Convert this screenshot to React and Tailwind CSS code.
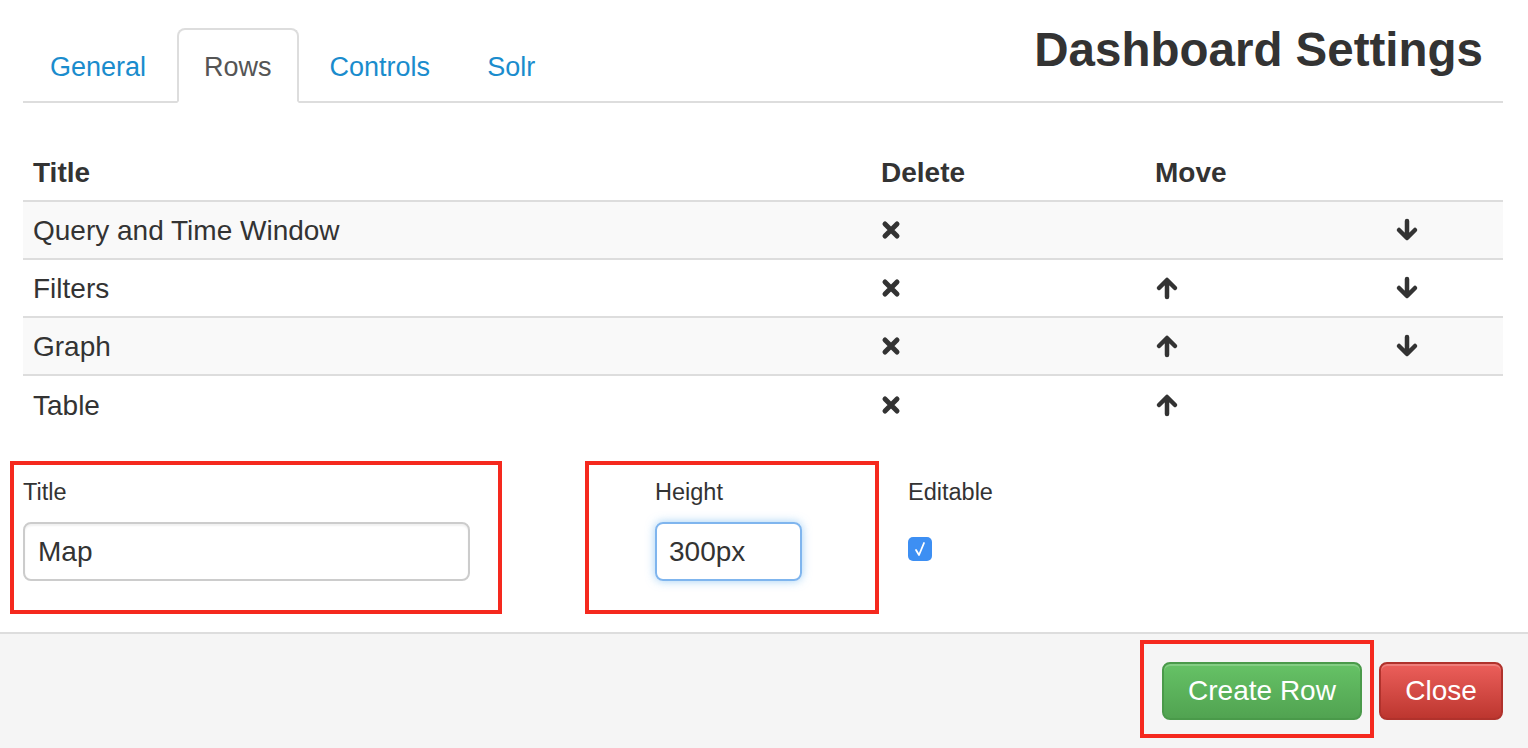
import React from "react";

const rows = [
  { title: "Query and Time Window", up: false, down: true },
  { title: "Filters", up: true, down: true },
  { title: "Graph", up: true, down: true },
  { title: "Table", up: true, down: false },
];

// icono de borrar (x gruesa)
const RemoveIcon = () => (
  <svg width="20" height="20" viewBox="0 0 20 20">
    <path d="M4 4 L16 16 M16 4 L4 16" stroke="#333" strokeWidth="5" strokeLinecap="round" />
  </svg>
);

const ArrowUp = () => (
  <svg width="24" height="24" viewBox="0 0 24 24">
    <path d="M12 21 V5 M4 12 L12 4 L20 12" stroke="#333" strokeWidth="4.5" strokeLinecap="round" strokeLinejoin="round" fill="none" />
  </svg>
);

const ArrowDown = () => (
  <svg width="24" height="24" viewBox="0 0 24 24">
    <path d="M12 3 V19 M4 12 L12 20 L20 12" stroke="#333" strokeWidth="4.5" strokeLinecap="round" strokeLinejoin="round" fill="none" />
  </svg>
);

const App = () => {
  const tabs = ["General", "Rows", "Controls", "Solr"];

  return (
    <div
      className="relative w-[1528px] h-[748px] overflow-hidden bg-white text-[#333] flex flex-col"
      style={{ fontFamily: '"Liberation Sans", Arial, sans-serif' }}
    >
      <div className="pl-[23px] pr-[25px]">
        {/* Pestañas y título */}
        <div className="flex items-end justify-between border-b-2 border-[#ddd] h-[103px]">
          <div className="flex items-end gap-[5px] pl-[1px]">
            {tabs.map((t) =>
              t === "Rows" ? (
                <div
                  key={t}
                  className="mb-[-2px] px-[25px] h-[75px] flex items-center pt-[3px] border-2 border-[#ddd] border-b-white rounded-t-[8px] bg-white text-[27px] text-[#555]"
                >
                  {t}
                </div>
              ) : (
                <div key={t} className="mb-[-2px] px-[26px] h-[75px] flex items-center pt-[3px] text-[27px] text-[#1a8ccd]">
                  {t}
                </div>
              )
            )}
          </div>
          <h1 className="self-start mt-[22px] mr-[20px] text-[47.5px] leading-[56px] font-bold text-[#333]">
            Dashboard Settings
          </h1>
        </div>

        {/* Tabla de filas */}
        <div className="mt-[41px] text-[28px]">
          <div className="grid grid-cols-[848px_274px_240px_118px] h-[58px] items-center border-b-2 border-[#ddd] font-bold pt-[1px]">
            <div className="pl-[10px]">Title</div>
            <div className="pl-[10px]">Delete</div>
            <div className="pl-[10px]">Move</div>
            <div></div>
          </div>
          {rows.map((r, i) => (
            <div
              key={r.title}
              className={`grid grid-cols-[848px_274px_240px_118px] h-[58px] items-center ${i < rows.length - 1 ? "border-b-2 border-[#ddd]" : ""} ${i % 2 === 0 ? "bg-[#f9f9f9]" : "bg-white"}`}
            >
              <div className="pl-[10px] pt-[2px]">{r.title}</div>
              <div className="pl-[10px] flex items-center"><RemoveIcon /></div>
              <div className="pl-[10px] flex items-center">{r.up && <ArrowUp />}</div>
              <div className="pl-[10px] flex items-center">{r.down && <ArrowDown />}</div>
            </div>
          ))}
        </div>

        {/* Formulario nueva fila */}
        <div className="mt-[43px] flex text-[23.5px]">
          <div className="w-[632px]">
            <div className="h-[30px] leading-[30px]">Title</div>
            <div className="mt-[15px] w-[447px] h-[59px] border-2 border-[#ccc] rounded-[8px] flex items-center pl-[13px] text-[28px] text-[#333] shadow-[inset_0_2px_2px_rgba(0,0,0,0.06)]">
              Map
            </div>
          </div>
          <div className="w-[253px]">
            <div className="h-[30px] leading-[30px]">Height</div>
            <div className="mt-[15px] w-[147px] h-[59px] border-2 border-[#7fb5ee] rounded-[8px] flex items-center pl-[12px] text-[28px] text-[#333] shadow-[0_0_10px_rgba(82,168,236,0.55)]">
              300px
            </div>
          </div>
          <div>
            <div className="h-[30px] leading-[30px]">Editable</div>
            <div className="mt-[30px] w-[24px] h-[24px] rounded-[5px] bg-[#3d8ff3] flex items-center justify-center">
              <svg width="16" height="18" viewBox="0 0 16 18">
                <path d="M4 10 L7 15 L12 3" stroke="white" strokeWidth="1.8" fill="none" strokeLinecap="round" strokeLinejoin="round" />
              </svg>
            </div>
          </div>
        </div>
      </div>

      {/* Pie del modal */}
      <div className="mt-auto h-[116px] border-t-2 border-[#ddd] bg-[#f5f5f5] flex justify-end items-start pt-[28px] pr-[25px] gap-[17px]">
        <button className="w-[200px] h-[58px] rounded-[8px] border-2 border-[#4a9a4a] bg-gradient-to-b from-[#66c266] to-[#51a351] text-white text-[28px] shadow-[inset_0_2px_0_rgba(255,255,255,0.2)]">
          Create Row
        </button>
        <button className="w-[124px] h-[58px] rounded-[8px] border-2 border-[#b0322c] bg-gradient-to-b from-[#ec5f5b] to-[#bd362f] text-white text-[28px] shadow-[inset_0_2px_0_rgba(255,255,255,0.2)]">
          Close
        </button>
      </div>

      {/* Recuadros rojos de anotación */}
      <div className="absolute left-[10px] top-[461px] w-[492px] h-[153px] border-4 border-[#f5291e] pointer-events-none" />
      <div className="absolute left-[585px] top-[461px] w-[294px] h-[153px] border-4 border-[#f5291e] pointer-events-none" />
      <div className="absolute left-[1140px] top-[640px] w-[234px] h-[98px] border-4 border-[#f5291e] pointer-events-none" />
    </div>
  );
};

export default App;
